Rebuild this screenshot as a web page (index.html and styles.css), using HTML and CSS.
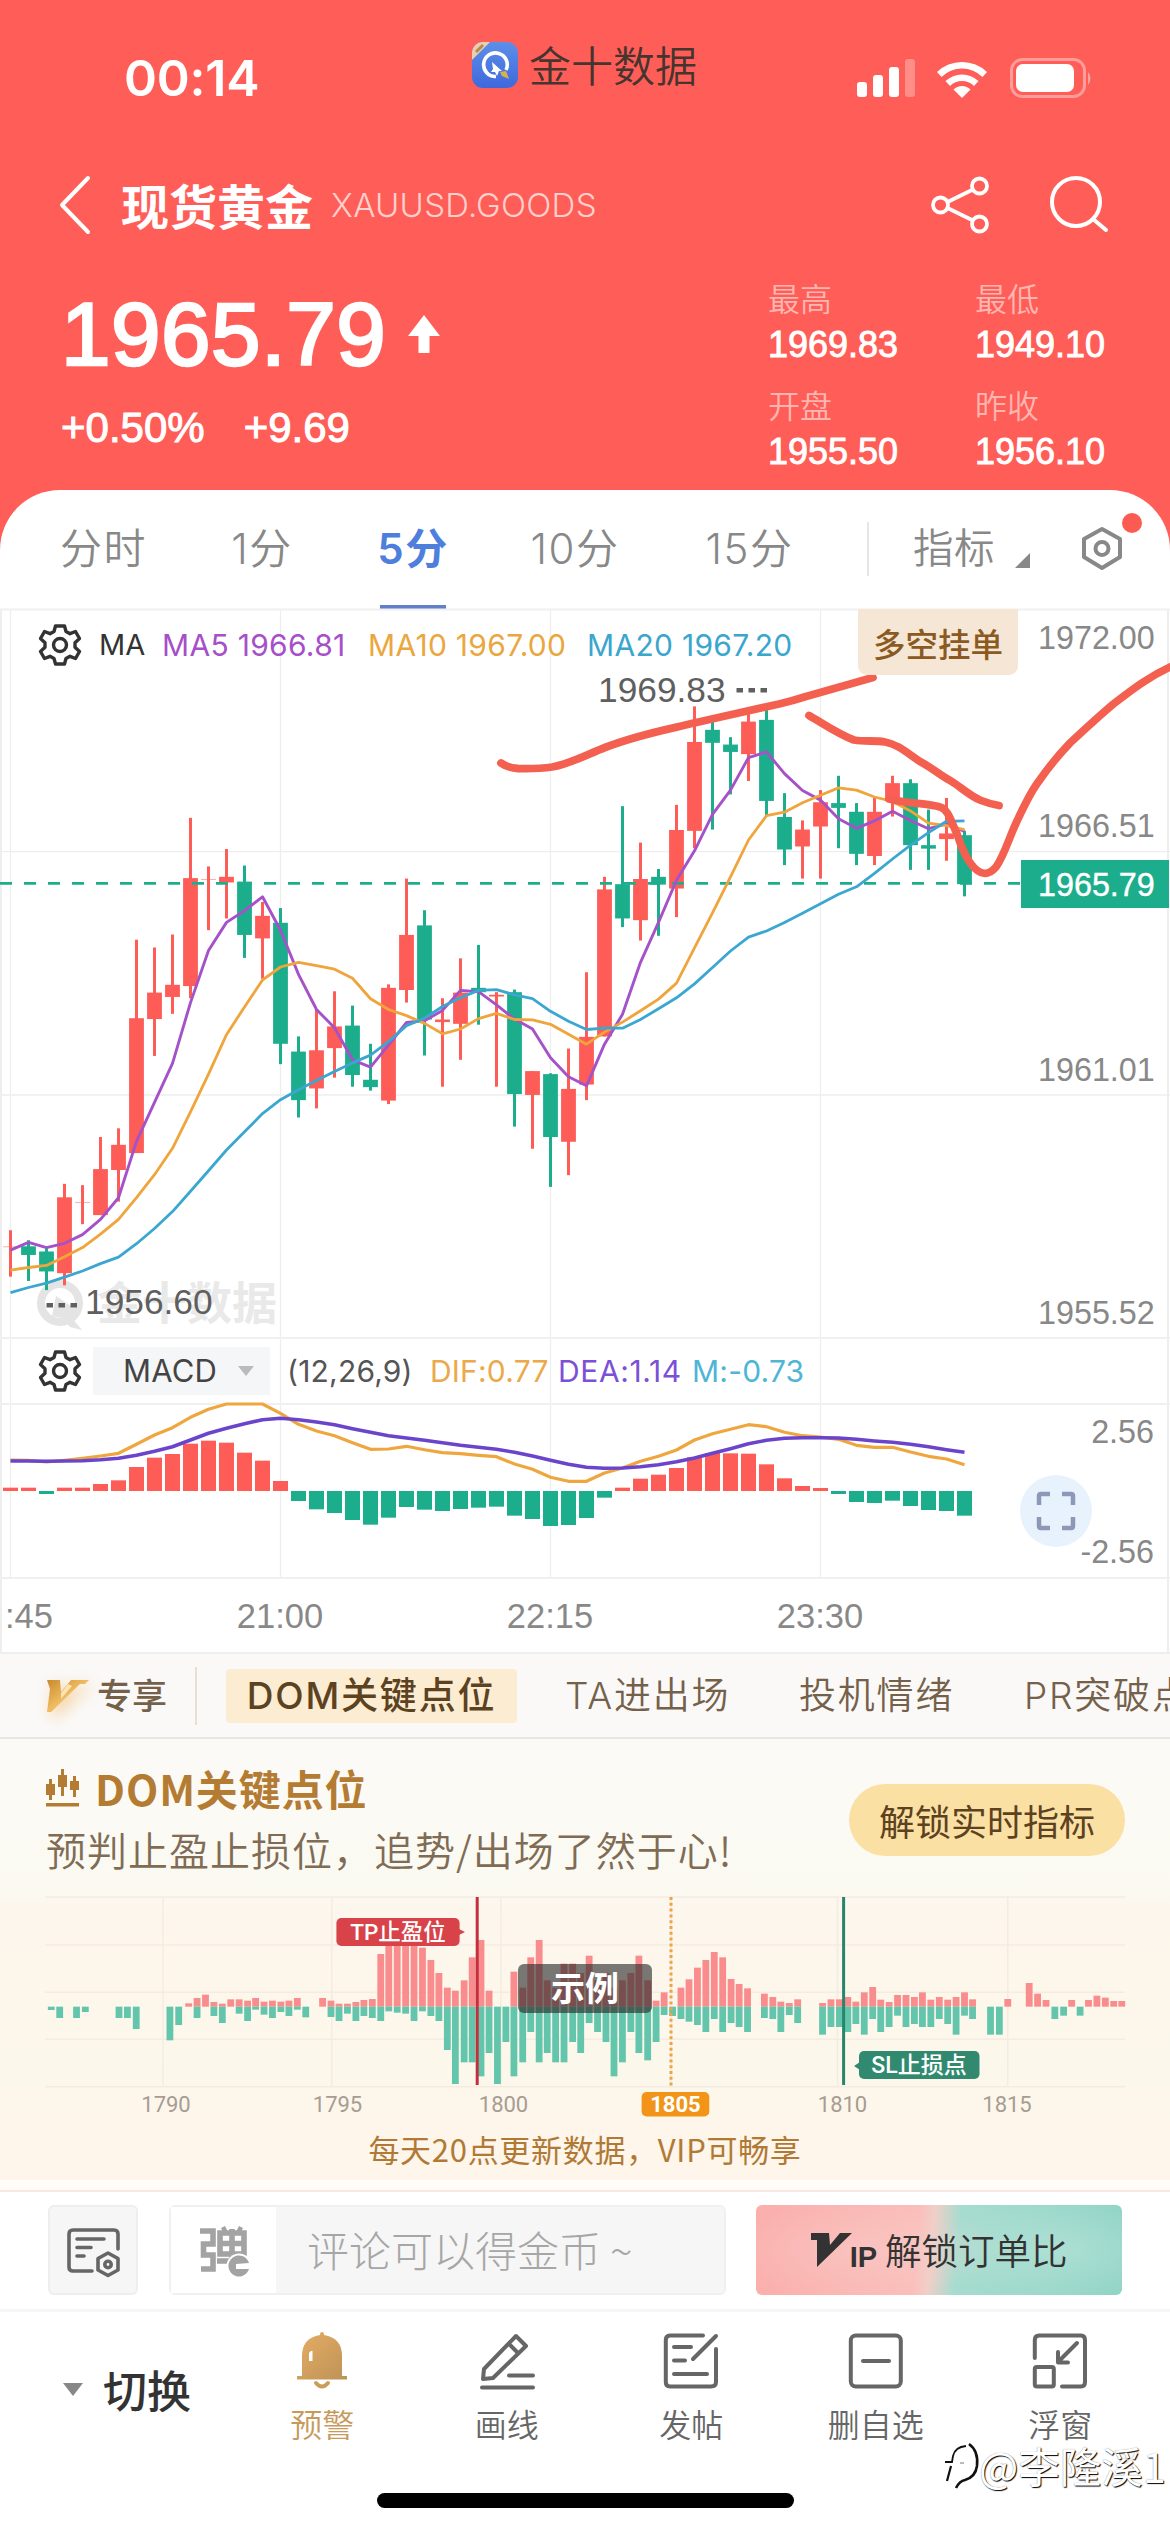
FILE: index.html
```html
<!DOCTYPE html>
<html lang="zh-CN">
<head>
<meta charset="utf-8">
<title>现货黄金 XAUUSD.GOODS</title>
<link rel="stylesheet" href="styles.css">
</head>
<body>
<header class="header">
  <div class="status">
    <span class="clock">00:14</span>
    <div class="brand">
      <svg class="brand-logo" viewBox="0 0 46 46" width="46" height="46">
        <defs><linearGradient id="lg" x1="0" y1="0" x2="0" y2="1"><stop offset="0" stop-color="#5c8fe8"/><stop offset="1" stop-color="#3f68dd"/></linearGradient>
        <clipPath id="lc"><rect width="46" height="46" rx="11"/></clipPath></defs>
        <g clip-path="url(#lc)"><rect width="46" height="46" fill="url(#lg)"/>
        <path d="M0 0H18L0 18Z" fill="#e9cfae"/><path d="M4 10L11 3" stroke="#b58a52" stroke-width="3"/></g>
        <path d="M34 28A11.800 11.800 0 1 0 24 34.500" fill="none" stroke="#fff" stroke-width="3.600"/>
        <path d="M20 20L30 29L27 29L25 34L23 30L19 30L21 27Z" fill="#fff"/>
        <path d="M28 30L34 29L37 37L30 34Z" fill="#d8b24a"/>
      </svg>
      <span>金十数据</span>
    </div>
    <svg class="signals" viewBox="0 0 240 42" width="240" height="42">
      <g fill="#fff"><rect x="1" y="23" width="10" height="15" rx="3"/><rect x="17" y="16" width="10" height="22" rx="3"/><rect x="33" y="8" width="10" height="30" rx="3"/></g>
      <rect x="49" y="0" width="10" height="38" rx="3" fill="#fff" opacity=".3"/>
      <g transform="translate(106 38)" fill="#fff"><path d="M-25 -25A36 36 0 0 1 25 -25L20.500 -20A29 29 0 0 0 -20.500 -20Z"/><path d="M-16.500 -16A24 24 0 0 1 16.500 -16L12 -11A17 17 0 0 0 -12 -11Z"/><path d="M-8.500 -7.500A12 12 0 0 1 8.500 -7.500L0 1Z"/></g>
      <rect x="155.500" y="0.500" width="73" height="37" rx="11" fill="none" stroke="#fff" stroke-opacity=".4" stroke-width="3"/>
      <rect x="160" y="5" width="58" height="28" rx="7" fill="#fff"/>
      <path d="M232 13Q237 19 232 26Z" fill="#fff" opacity=".45"/>
    </svg>
  </div>
  <div class="titlebar">
    <svg class="back" viewBox="0 0 32 58" width="32" height="58"><path d="M29 2L3 29L29 56" fill="none" stroke="#fff" stroke-width="4" stroke-linecap="round" stroke-linejoin="round"/></svg>
    <h1 class="name">现货黄金</h1>
    <span class="code">XAUUSD.GOODS</span>
    <svg class="share" viewBox="0 0 60 58" width="60" height="58" fill="none" stroke="#fff" stroke-width="3.800"><circle cx="9.500" cy="29" r="7.500"/><circle cx="48.500" cy="10" r="7.500"/><circle cx="48.500" cy="48" r="7.500"/><path d="M16.500 26L42 13.500M16.500 32L42 44.500"/></svg>
    <svg class="search" viewBox="0 0 60 58" width="60" height="58" fill="none" stroke="#fff" stroke-width="4" stroke-linecap="round"><circle cx="26" cy="26" r="24"/><path d="M43 43L56 54"/></svg>
  </div>
  <div class="quote">
    <div class="last">
      <div class="price">1965.79 <svg viewBox="0 0 32 38" width="32" height="38"><path d="M16 0L32 21H21.500V38H10.500V21H0Z" fill="#fff"/></svg></div>
      <div class="change"><span>+0.50%</span><span>+9.69</span></div>
    </div>
    <dl class="stats">
      <div><dt>最高</dt><dd>1969.83</dd></div>
      <div><dt>最低</dt><dd>1949.10</dd></div>
      <div><dt>开盘</dt><dd>1955.50</dd></div>
      <div><dt>昨收</dt><dd>1956.10</dd></div>
    </dl>
  </div>
</header>

<main class="sheet">
  <nav class="periods">
    <span class="w127">分时</span><span class="w190">1分</span><span class="w112 on">5分</span><span class="w212">10分</span><span class="w137">15分</span>
    <i class="vline"></i>
    <span class="target">指标</span>
    <svg class="corner" width="15" height="15"><path d="M15 0V15H0Z" fill="#888"/></svg>
    <svg class="hex" viewBox="0 0 64 66" width="64" height="66"><path d="M20 18L38 28V46L20 57L2 46V28Z" transform="translate(1 -2)" fill="none" stroke="#888" stroke-width="4" stroke-linejoin="round"/><circle cx="21" cy="35.500" r="6.500" fill="none" stroke="#888" stroke-width="4"/><circle cx="51" cy="10" r="10" fill="#fc5b52"/></svg>
  </nav>

  <section class="kline">
    <svg id="kchart" viewBox="0 609 1170 1043" width="1170" height="1043"></svg>
    <div class="legend">
      <svg class="gear" viewBox="-22 -22 44 44" width="44" height="44"><use href="#gearpath"/></svg>
      <span class="ma">MA</span><span class="ma5">MA5 1966.81</span><span class="ma10">MA10 1967.00</span><span class="ma20">MA20 1967.20</span>
      <button class="orders">多空挂单</button>
    </div>
    <div class="macdbar">
      <svg class="gear" viewBox="-22 -22 44 44" width="44" height="44"><path id="gearpath" d="M-4.500 -19H4.500L6 -13.500L10 -11.300L15.500 -13.500L19.500 -6.500L15 -2.300V2.300L19.500 6.500L15.500 13.500L10 11.300L6 13.500L4.500 19H-4.500L-6 13.500L-10 11.300L-15.500 13.500L-19.500 6.500L-15 2.300V-2.300L-19.500 -6.500L-15.500 -13.500L-10 -11.300L-6 -13.500ZM6.500 0A6.500 6.500 0 1 0 -6.500 0A6.500 6.500 0 1 0 6.500 0Z" fill="none" stroke="#333" stroke-width="3.400" stroke-linejoin="round"/></svg>
      <span class="select">MACD<svg width="16" height="10"><path d="M0 0H16L8 10Z" fill="#bbb"/></svg></span>
      <span class="params">(12,26,9)</span><span class="dif">DIF:0.77</span><span class="dea">DEA:1.14</span><span class="mval">M:-0.73</span>
    </div>
    <button class="full"><svg viewBox="0 0 40 40" width="40" height="40"><path d="M3 14V5Q3 3 5 3H14M26 3H35Q37 3 37 5V14M37 26V35Q37 37 35 37H26M14 37H5Q3 37 3 35V26" fill="none" stroke="#8d97b8" stroke-width="4.500"/></svg></button>
  </section>

  <nav class="vipnav">
    <svg class="vlogo" viewBox="0 0 42 32" width="42" height="32"><defs><linearGradient id="gold" x1="0" y1="0" x2="1" y2="1"><stop offset="0" stop-color="#c98a2e"/><stop offset=".5" stop-color="#f0bd62"/><stop offset="1" stop-color="#d99a3a"/></linearGradient></defs><path d="M0 0H13L14 12L24 0H42L38 4H33L4 32H0L3 9Z" fill="url(#gold)"/><path d="M14 13L21 4L25 6L14 19Z" fill="#fbe3b4"/></svg>
    <b>专享</b><i></i>
    <span class="chip">DOM关键点位</span><span class="ta">TA进出场</span><span class="mood">投机情绪</span><span class="pr">PR突破点位</span>
  </nav>

  <section class="dom">
    <div class="domhead">
      <div>
        <h2><svg viewBox="0 0 34 38" width="34" height="38" fill="#b47c33"><path d="M0 15H3V10H6V15H9V26H6V31H3V26H0ZM12 6H15V0H18V6H21V18H18V27H15V18H12ZM24 12H27V7H30V12H33V21H30V28H27V21H24ZM0 34H33V37.500H0Z"/></svg>DOM关键点位</h2>
        <p>预判止盈止损位，追势/出场了然于心!</p>
      </div>
      <button class="unlock">解锁实时指标</button>
    </div>
    <svg id="domchart" viewBox="0 1892 1170 230" width="1170" height="230"></svg>
    <p class="domfoot">每天20点更新数据，VIP可畅享</p>
  </section>

  <section class="comment">
    <button class="cfg"><svg viewBox="0 0 54 50" width="54" height="50" fill="none" stroke="#666" stroke-width="3.600" stroke-linecap="round" stroke-linejoin="round"><path d="M51 22V7Q51 3 47 3H6Q2 3 2 7V40Q2 44 6 44H25M10 12H37M10 20.500H24M10 29H17"/><path d="M41 26L51 31.500V43L41 48.500L31 43V31.500Z"/><circle cx="41" cy="37.500" r="3.200"/></svg></button>
    <div class="field">
      <span class="danmu"><svg viewBox="0 0 50 50" width="50" height="50"><g fill="none" stroke="#a3a3a3" stroke-width="5.600"><path d="M0 4H13V17H3.500V28H13V42H1M20 6H44V27H20ZM32 2V44M20 16.500H44M17 34H44"/><path d="M23 0L26 6M41 0L38 6" stroke-width="4.500"/></g><circle cx="39" cy="39" r="12.500" fill="#fff"/><path d="M49 36A10.500 10.500 0 1 0 49 42H36V37Z" fill="#a3a3a3"/></svg></span>
      <span class="ph">评论可以得金币<em>~</em></span>
    </div>
    <button class="vip"><svg viewBox="0 0 42 34" width="42" height="34"><path d="M0 0H18L19 12L29 0H41L6 34V7H0Z" fill="#333"/></svg><b>IP</b><span>解锁订单比</span></button>
  </section>

  <footer class="tools">
    <div class="switch"><svg width="20" height="13"><path d="M0 0H20L10 13Z" fill="#888"/></svg>切换</div>
    <div class="tool gold"><svg viewBox="0 0 56 58" width="56" height="58"><defs><linearGradient id="bell" x1="0" y1="0" x2="1" y2="1"><stop offset="0" stop-color="#e6ad66"/><stop offset="1" stop-color="#bd9256"/></linearGradient></defs><path d="M26 3Q26 0 28 0T30 3Q48 6 48 24V44H53V47.500H3V44H8V24Q8 6 26 3ZM17 19Q15 20 15 22V29H18.500V19Z" fill="url(#bell)"/><path d="M22 51Q28 58 34 51" fill="none" stroke="#c99d5a" stroke-width="4"/></svg>预警</div>
    <div class="tool"><svg viewBox="0 0 54 58" width="54" height="58"><path d="M2 55.500H53M29 43.500H53M36 4L46 14L13 46L3 47L4 37ZM29 12L38 21" /></svg>画线</div>
    <div class="tool"><svg viewBox="0 0 54 58" width="54" height="58"><path d="M39 3.500H6Q1.800 3.500 1.800 8V50Q1.800 54.500 6 54.500H47Q52 54.500 52 50V17M10 15H27M10 28.500H21M10 42H43M29 27L52 4"/></svg>发帖</div>
    <div class="tool"><svg viewBox="0 0 54 58" width="54" height="58"><rect x="1.800" y="3.500" width="50" height="51" rx="5"/><path d="M14 29H40"/></svg>删自选</div>
    <div class="tool"><svg viewBox="0 0 54 58" width="54" height="58"><path d="M1.800 26V8Q1.800 3.500 6 3.500H48Q52 3.500 52 8V50Q52 54.500 48 54.500H29M44 11L25 30M25 20V30.500H35"/><rect x="1.800" y="35" width="19" height="19.500" rx="2"/></svg>浮窗</div>
  </footer>
  <div class="home"></div>
</main>
<div class="mark"><svg viewBox="0 0 34 48" width="34" height="48" fill="none" stroke="#111" stroke-width="2"><path d="M24 2C31 7 33 15 32 24C31 31 27 36 20 38C15 39 13 42 11 46" stroke-width="2.600"/><path d="M21 4Q10 5 8 14L7 20H0" stroke-width="1.800"/><path d="M6 24L2 39" stroke-width="2.200"/><path d="M15 21H19" stroke="#bbb"/></svg><span>@李隆溪1</span></div>
<script src="chart.js"></script>
</body>
</html>
```

FILE: styles.css
```css
* { box-sizing: border-box; }
body { margin: 0; width: 1170px; height: 2532px; position: relative; overflow: hidden; background: #ff5d57; font-family: "Noto Sans CJK SC", sans-serif; color: #333; }
h1, h2, p, dl, dd { margin: 0; }
button { border: 0; padding: 0; font: inherit; color: inherit; display: block; }
svg { display: block; flex: none; overflow: visible; }

.header { height: 490px; color: #fff; overflow: hidden; }
.status { height: 150px; padding: 0 0 0 124px; display: flex; align-items: flex-start; }
.clock { font: 600 50px/60px Inter, sans-serif; width: 348px; margin-top: 48px; letter-spacing: -0.2px; }
.brand { display: flex; align-items: center; gap: 11px; width: 384px; margin-top: 39px; color: #46342f; font-size: 42px; line-height: 54px; font-weight: 350; }
.brand span { margin-top: -2px; }
.signals { margin-top: 59px; }

.titlebar { height: 112px; padding: 0 60px 0 59px; display: flex; align-items: center; }
.name { font-size: 48px; line-height: 60px; font-weight: 700; margin: -5px 0 0 30px; }
.code { font: 300 33px/60px Inter, sans-serif; letter-spacing: .3px; color: #ffd0cc; margin-left: 18px; margin-top: -2px; flex: 1; }
.search { margin-left: 59px; }
.back, .share, .search { position: relative; top: -1px; }

.quote { display: flex; justify-content: space-between; font-family: "Liberation Sans", "Noto Sans CJK SC", sans-serif; padding: 13px 65px 0 61px; }
.price { display: flex; align-items: center; gap: 22px; font-size: 89px; line-height: 100px; letter-spacing: .5px; margin-top: 9px; -webkit-text-stroke: 2.6px #fff; }
.change { display: flex; gap: 39px; font-size: 42px; line-height: 50px; margin-top: 19px; -webkit-text-stroke: 1px #fff; }
.stats { display: grid; grid-template-columns: 207px 130px; grid-auto-rows: 107px; }
.stats dt { font-size: 32px; line-height: 44px; color: #ffb5b0; font-family: "Noto Sans CJK SC"; font-weight: 350; }
.stats dd { font-size: 36px; line-height: 46px; margin-top: 3px; -webkit-text-stroke: .9px #fff; }

.sheet { background: #fff; height: 2042px; border-radius: 60px 60px 0 0; }
.periods { height: 119px; padding-left: 40px; display: flex; align-items: flex-start; font: 400 42px/60px Inter, "Noto Sans CJK SC", sans-serif; color: #888; }
.periods span { display: flex; justify-content: center; height: 119px; padding-top: 29px; font-weight: 350; letter-spacing: 1.5px; }
.w127 { width: 127px; } .w190 { width: 190px; } .w112 { width: 112px; } .w212 { width: 212px; } .w137 { width: 137px; }
.periods .on { color: #4f7fdc; font-weight: 600; background: linear-gradient(#6280c8, #6280c8) center bottom / 66px 4px no-repeat; }
.periods .target { font-size: 40.500px; letter-spacing: .5px; }
.vline { width: 2px; height: 54px; background: #e6e6e6; margin: 32px 44px 0 49px; }
.corner { margin: 63px 51px 0 20px; }
.hex { margin-top: 23px; }

.kline { position: relative; height: 1043px; }
.legend { position: absolute; left: 0; top: 0; width: 1170px; height: 72px; display: flex; align-items: center; padding-left: 38px; font: 400 30px/40px Inter, sans-serif; letter-spacing: .3px; white-space: nowrap; }
.legend .ma { width: 63px; margin-left: 17px; font-size: 29px; letter-spacing: 0; }
.ma5 { color: #a64fc8; width: 206px; }
.ma10 { color: #eaa73f; width: 219px; }
.ma20 { color: #3ba6cd; width: 271px; }
.orders { align-self: flex-start; width: 160px; height: 66px; border-radius: 0 0 9px 9px; background: #f5e6d6; color: #8a5a20; font: 500 32.500px/63px "Noto Sans CJK SC", sans-serif; letter-spacing: 0; }
.macdbar { position: absolute; left: 0; top: 729px; width: 1170px; height: 66px; display: flex; align-items: center; padding-left: 38px; font: 400 30px/40px Inter, sans-serif; letter-spacing: .2px; white-space: nowrap; }
.select { display: flex; align-items: center; justify-content: space-between; width: 177px; height: 48px; margin: 0 17px 0 11px; padding: 0 16px 0 30px; background: #f5f6f8; color: #444; font-size: 31px; }
.params { width: 143px; color: #555; }
.dif { width: 128px; color: #eaa94a; }
.dea { width: 134px; color: #7c50d6; letter-spacing: .6px; }
.mval { color: #4fb5d6; }
.full { position: absolute; left: 1020px; top: 866px; width: 72px; height: 72px; border-radius: 36px; background: #e8f2fd; padding: 16px; }
#kchart text { font-family: "Liberation Sans", sans-serif; }
#kchart .wm { font: 700 45px "Noto Sans CJK SC", sans-serif; }

.vipnav { height: 87px; padding-left: 47px; display: flex; align-items: center; background: #faf9f8; border-top: 2px solid #eee; border-bottom: 2px solid #e8e6e3; font: 350 37px/54px Inter, "Noto Sans CJK SC", sans-serif; color: #75614a; white-space: nowrap; overflow: hidden; letter-spacing: 1.8px; }
.vipnav > * { flex: none; }
.vlogo { filter: drop-shadow(4px 6px 8px #f5cf9a); }
.vipnav b { font-size: 35px; margin-left: 8px; font-weight: 500; letter-spacing: 0; }
.vipnav i { width: 2px; height: 58px; background: #eadfce; margin: 0 29px 0 28px; }
.chip { width: 291px; height: 54px; text-align: center; background: #fcecd2; color: #5c421f; font-weight: 500; border-radius: 4px; }
.ta { width: 234px; margin-left: 48px; }
.mood { width: 225px; }

.dom { height: 441px; background: linear-gradient(#fcfaf7 0, #fafaf2 140px, #fdf6ec 175px, #fcf7eb 340px, #fef5eb 400px); }
.domhead { height: 153px; display: flex; justify-content: space-between; padding: 0 45px 0 46px; align-items: flex-start; }
.dom h2 { display: flex; align-items: center; gap: 15px; font: 700 42px/60px "Noto Sans CJK SC", sans-serif; letter-spacing: .9px; color: #b47c33; margin-top: 19px; }
.domhead p { font-size: 40px; font-weight: 350; line-height: 58px; letter-spacing: 1px; color: #806b55; margin-top: 2px; }
.unlock { width: 276px; height: 72px; margin-top: 45px; border-radius: 36px; background: #fbe0a4; color: #5c421f; font-size: 36px; line-height: 67px; }
.domfoot { text-align: center; font-size: 31px; letter-spacing: .7px; line-height: 40px; color: #b07a35; margin-top: 7px; }
#domchart text { font-family: Roboto, "Noto Sans CJK SC", sans-serif; }

.comment { height: 122px; border-top: 2px solid #f7e8e6; box-shadow: 0 -9px 0 #fffdf5; background: #fff; border-bottom: 3px solid #f6f6f6; padding: 13px 48px 0; margin-top: 10px; display: flex; }
.cfg { width: 90px; height: 90px; background: #f6f6f6; border: 2px solid #eee; border-radius: 6px; padding: 20px 17px; }
.field { width: 557px; height: 90px; margin: 0 30px 0 31px; display: flex; background: #f6f6f6; border: 2px solid #f0f0f0; border-radius: 6px; }
.danmu { width: 105px; background: #fff; padding: 20px 0 0 29px; }
.ph { font-size: 42px; line-height: 83px; font-weight: 300; color: #a6a6a6; margin-left: 31px; }
.ph em { font-style: normal; margin-left: 9px; }
.vip { width: 366px; height: 90px; border-radius: 6px; display: flex; align-items: center; padding-left: 55px; color: #333; background: radial-gradient(ellipse 150px 45px at 105px 45px, #f9cfcc66, #f9cfcc00), radial-gradient(ellipse 130px 50px at 300px 45px, #c0e6dd88, #c0e6dd00), linear-gradient(95deg, #faafac 0, #fabfbb 44%, #f0cfc8 48%, #a6dccf 55%, #90d4c6 100%); }
.vip b { font: 700 29px/30px "Liberation Sans", sans-serif; margin: 14px 0 0 -11px; width: 43px; }
.vip span { font-size: 36.500px; font-weight: 350; white-space: nowrap; margin-top: -2px; }

.tools { height: 170px; display: flex; padding-left: 63px; color: #666; }
.switch { width: 167px; display: flex; align-items: center; gap: 20px; font-size: 44px; line-height: 60px; font-weight: 500; color: #333; height: 154px; }
.tool { width: 184.500px; display: flex; flex-direction: column; align-items: center; padding-top: 20px; font-size: 32px; line-height: 46px; font-weight: 350; gap: 10px; }
.tool svg { fill: none; stroke: #666; stroke-width: 4; stroke-linecap: round; stroke-linejoin: round; }
.gold svg { stroke: none; }
.gold { color: #c79a5c; }
.home { width: 417px; height: 15px; border-radius: 8px; background: #000; margin: 11px auto 0; }
.mark { position: absolute; left: 945px; top: 2442px; display: flex; align-items: flex-start; color: #fff; font-size: 41.500px; line-height: 48px; text-shadow: 1px 1px 1px #000, 0 0 1px #888; white-space: nowrap; }
.mark span { margin-top: -1px; }
```

FILE: chart.js
```js
const RED = '#fd5d56', GREEN = '#1cae8c';
const rect = (x, y, w, h, c, o) => `<rect x="${x}" y="${y}" width="${w}" height="${h}" fill="${c}"${o ? ` ${o}` : ''}/>`;
const line = (x1, y1, x2, y2, c, w, o) => `<line x1="${x1}" y1="${y1}" x2="${x2}" y2="${y2}" stroke="${c}" stroke-width="${w}"${o ? ` ${o}` : ''}/>`;
const text = (x, y, s, size, c, o) => `<text x="${x}" y="${y}" font-size="${size}" fill="${c}" ${o || ''}>${s}</text>`;
const X = i => 10.5 + 18 * i;
const Y = v => 660 + v / 2.306;
const M = v => 1330 + v / 3;
const poly = (a, f, c, w) => `<polyline points="${a.map((v, i) => X(i) + ',' + f(v).toFixed(1)).join(' ')}" fill="none" stroke="${c}" stroke-width="${w}" stroke-linejoin="round"/>`;

// each candle: up flag, high, body top, body bottom, low
const candles = [
[1,1315,1352,1353,1422],[0,1338,1352,1372,1432],[0,1355,1364,1410,1453],[1,1208,1239,1414,1442],[1,1211,1250,1251,1301],[1,1100,1174,1280,1280],[1,1080,1118,1176,1249],[1,645,826,1137,1137],[1,663,767,828,913],[1,633,749,777,816],[1,364,503,752,780],[1,476,505,506,623],[1,436,500,513,596],[0,474,511,634,687],[1,558,590,642,735],[0,572,606,885,932],[0,868,903,1015,1055],[1,806,900,988,1034],[1,764,845,895,963],[0,797,843,957,984],[0,885,968,985,993],[1,748,756,1016,1024],[1,504,634,761,790],[0,577,612,829,912],[1,780,829,835,984],[1,688,767,839,922],[0,657,756,766,841],[1,766,772,776,984],[0,760,766,1001,1076],[1,948,948,1003,1127],[0,953,955,1100,1215],[1,896,989,1111,1188],[1,720,869,979,1015],[1,500,529,868,868],[0,337,517,596,616],[1,421,505,600,647],[0,482,500,518,636],[1,334,392,527,593],[1,107,189,394,434],[0,140,161,191,391],[0,178,195,212,310],[1,120,142,217,279],[0,110,138,325,360],[0,307,362,437,473],[1,370,391,430,504],[1,300,328,384,504],[0,267,330,341,434],[0,330,350,447,473],[1,318,350,452,473],[1,267,284,325,361],[0,275,284,427,484],[0,345,427,435,484],[1,318,400,413,463],[0,394,404,517,545]];
const ma5 = [1361,1343,1355,1345,1325,1290,1240,1110,1020,930,790,670,605,578,546,623,725,806,848,922,939,888,836,832,808,762,765,795,828,851,917,961,982,886,817,697,605,508,440,356,300,225,212,262,301,323,366,388,371,349,370,389,378,395];
const ma10 = [1407,1401,1396,1376,1355,1324,1290,1240,1187,1126,1042,955,864,800,738,708,697,705,713,734,781,806,820,838,862,851,827,815,829,830,840,863,886,858,835,809,782,745,664,583,500,415,359,351,329,312,295,300,316,326,348,376,382,391];
const ma20 = [1459,1447,1437,1423,1409,1392,1377,1346,1311,1272,1225,1178,1130,1088,1046,1014,991,970,949,929,911,880,843,826,799,779,762,760,772,781,810,833,852,849,849,829,804,779,747,709,671,639,625,605,584,562,540,523,492,459,427,398,372,371];
const hist = [473,473,492,473,473,462,451,411,383,372,341,332,338,368,392,453,513,538,549,570,584,563,531,539,543,537,533,530,557,567,588,585,564,503,473,446,434,414,382,369,370,371,403,445,468,474,492,516,519,512,528,540,543,557];
const dif = [390,391,396,391,385,378,370,343,315,293,262,238,222,222,222,250,283,303,317,338,358,357,349,359,368,371,376,380,402,418,442,454,454,429,414,394,379,360,330,311,298,284,290,307,317,321,328,346,352,352,366,379,387,404];
const dea = [393,393,394,393,392,389,385,376,364,350,330,310,295,281,269,265,269,276,284,296,307,317,324,331,338,346,352,358,367,378,391,403,412,415,414,410,404,395,384,370,356,341,331,325,323,323,324,328,333,337,343,350,359,367];

let s = '';
const G = '#eee';
for (const x of [10.5, 280.5, 550.5, 820.5]) s += line(x, 609, x, 1578, G, 1.3);
for (const x of [1, 1168]) s += line(x, 609, x, 1652, G, 2);
for (const y of [851.7, 1095]) s += line(0, y, 1170, y, G, 1.3);
for (const y of [609.5, 1338, 1404, 1578]) s += line(0, y, 1170, y, '#f0f0f0', 2);
// brand mark behind the candles
s += '<circle cx="60" cy="1303" r="19" fill="none" stroke="#e4e4e4" stroke-width="8"/><path d="M56 1296L80 1312L70 1316L82 1330L70 1327L62 1318L52 1316Z" fill="#e4e4e4"/>';
s += text(97, 1320, '金十数据', 45, '#e9e9e9', 'class="wm"');
candles.forEach(([up, h, t, b, l], i) => {
  const c = up ? RED : GREEN, thin = b - t < 2;
  s += rect(X(i) - 1.5, Y(h), 3, Math.max(0, Y(l) - Y(h)), c);
  s += rect(X(i) - 7.4, Y(t), 14.8, thin ? 1 : Y(b) - Y(t), c, thin ? 'opacity=".5"' : '');
});
s += line(0, 883.4, 1021, 883.4, GREEN, 2.8, 'stroke-dasharray="12 12"');
s += poly(ma5, Y, '#a552c8', 2.9) + poly(ma10, Y, '#f0a43c', 2.8) + poly(ma20, Y, '#3ba7d0', 2.8);
[[1038, 649, '1972.00'], [1038, 837, '1966.51'], [1038, 1081, '1961.01'], [1038, 1324, '1955.52']].forEach(a => s += text(a[0], a[1], a[2], 32.3, '#888'));
s += rect(1021, 860, 148, 48, GREEN) + text(1038, 896, '1965.79', 32.3, '#fff', 'stroke="#fff" stroke-width=".4"');
s += text(598, 702, '1969.83', 35.3, '#5f5f5f') + text(85, 1314, '1956.60', 35.3, '#5f5f5f');
for (const x of [736.5, 748.5, 760.5]) s += rect(x, 688, 6.5, 4.5, '#5f5f5f');
for (const x of [46.5, 58.5, 70.5]) s += rect(x, 1303, 6.5, 4.5, '#5f5f5f');
hist.forEach((v, i) => s += v < 483 ? rect(X(i) - 7.5, M(v), 15, M(483) - M(v), RED) : rect(X(i) - 7.5, M(483), 15, M(v) - M(483), GREEN));
s += poly(dif, M, '#efa63f', 3.2) + poly(dea, M, '#6a45cc', 3.6);
s += text(1154, 1443, '2.56', 32.3, '#888', 'text-anchor="end"') + text(1154, 1563, '-2.56', 32.3, '#888', 'text-anchor="end"');
[[29, ':45'], [280, '21:00'], [550, '22:15'], [820, '23:30']].forEach(a => s += text(a[0], 1628, a[1], 34.5, '#888', 'text-anchor="middle"'));
// user drawn trend strokes
s += `<g fill="none" stroke="#f4604f" stroke-width="7.800" stroke-linecap="round" stroke-linejoin="round">
<path d="M501 763Q508 768 518 768.500Q538 769 552 767C570 764 588 754 605 747.500C640 734 670 729 694 723L779 704Q792 701 806 696.500L873 677.500"/>
<path d="M809 715.500C824 724 838 734 854 740C866 742 874 740 885 742C900 745 908 754 920 761.500C934 769 941 776 951 781C962 788 970 796 981 800.500Q990 804 999 805.500"/>
<path d="M889 799C908 804 926 803 940 807C948 809 951 821 957 834C962 849 966 858 971 864Q984 881 996 867C1004 856 1009 838 1017 821C1025 804 1031 791 1039 781Q1052 762 1070 743C1085 729 1099 716 1114 703.500C1134 688 1150 676 1172 666"/></g>`;
document.getElementById('kchart').innerHTML = s;

// depth histogram: x, upper bar edge, lower bar edge (0 = none)
const left = [[134,0,420],[156,0,444],[200,0,444],[223,0,426],[311,0,444],[333,0,444],[356,0,477],[444,0,511],[467,0,465],[493,400,0],[515,384,444],[537,374,0],[559,396,438],[581,401,459],[603,388,0],[625,388,431],[647,392,453],[668,384,419],[690,395,434],[712,392,444],[734,395,426],[755,392,438],[777,384,419],[799,0,442],[843,384,0],[865,392,441],[886,401,453],[908,401,431],[930,396,453],[951,390,438],[973,387,444],[995,252,453],[1016,227,424],[1038,227,428],[1060,227,431],[1082,227,453],[1104,233,424],[1126,270,438],[1147,309,453],[1169,353,540],[1190,362,642],[1213,331,577],[1234,262,577],[1257,210,619],[1278,362,549],[1300,0,642],[1322,0,516],[1343,305,619],[1366,353,577],[1387,262,486],[1409,210,577],[1430,331,549],[1452,353,577],[1474,281,577]];
const right = [[7,281,516],[28,309,549],[50,257,459],[72,331,486],[94,309,516],[115,353,619],[137,331,577],[159,309,486],[180,257,549],[203,331,571],[225,392,516],[246,367,435],[268,0,438],[290,353,447],[311,328,455],[333,293,465],[355,270,486],[377,246,447],[399,262,486],[421,327,459],[442,342,471],[464,355,486],[508,371,444],[530,381,447],[551,395,486],[573,399,435],[595,388,459],[660,399,494],[682,388,471],[704,388,471],[726,381,486],[747,395,462],[769,367,494],[791,351,447],[812,389,486],[834,396,471],[856,375,437],[878,375,471],[900,381,462],[921,367,471],[943,389,471],[965,381,447],[987,389,462],[1009,381,494],[1031,367,437],[1052,388,447],[1099,0,494],[1122,0,494],[1144,387,0],[1200,339,0],[1222,371,0],[1244,390,0],[1267,0,447],[1290,0,437],[1311,390,0],[1333,0,437],[1355,390,0],[1377,377,0],[1399,383,0],[1421,393,0],[1442,393,0]];
const D = v => 1870 + v / 3;
let d = '';
for (const y of [1897, 1945, 1992.3, 2039.3, 2086.7]) d += line(45, y, 1125, y, '#f6ebe2', 1.5);
for (const x of [163, 331.8, 500.9, 671, 837.5, 1007.8]) d += line(x, 1897, x, 2086, '#f6ebe2', 1.5);
const bar = (x, u, b) => {
  if (u) d += rect(x - 3.4, D(u), 6.8, D(410) - D(u), '#f98c8c');
  if (b) d += rect(x - 3.4, D(410), 6.8, D(b) - D(410), '#63c6ac');
};
left.forEach(([x, u, b]) => bar(x / 2.6133, u, b));
right.forEach(([x, u, b]) => bar(570 + x / 2.6133, u, b));
d += line(477.2, 1897, 477.2, 2085, '#c3303c', 3) + line(671, 1897, 671, 2087, '#efa347', 3, 'stroke-dasharray="3 2.8"') + line(843.6, 1897, 843.6, 2085, '#28856b', 3);
d += rect(336.4, 1918, 123.2, 28, '#d8434a', 'rx="5"') + '<path d="M459 1929L465 1932L459 1935Z" fill="#d8434a"/>' + text(398, 1940, 'TP止盈位', 22.5, '#fff', 'text-anchor="middle" font-weight="500"');
d += rect(859, 2051, 120.5, 28, '#318a70', 'rx="5"') + '<path d="M860 2062L854 2066L860 2070Z" fill="#318a70"/>' + text(919, 2073, 'SL止损点', 23, '#fff', 'text-anchor="middle" font-weight="500"');
d += rect(518, 1964, 134, 49, '#282828', 'rx="6" opacity=".62"') + text(585, 2001, '示例', 34, '#fff', 'text-anchor="middle" font-weight="700"');
d += rect(641.6, 2092, 67.7, 24.5, '#f29417', 'rx="5"') + text(675.5, 2112, '1805', 22, '#fff', 'text-anchor="middle" font-weight="700"');
[[166, 1790], [337.5, 1795], [503.5, 1800], [842.5, 1810], [1007, 1815]].forEach(a => d += text(a[0], 2112, a[1], 22, '#a79c92', 'text-anchor="middle"'));
document.getElementById('domchart').innerHTML = d;
```
